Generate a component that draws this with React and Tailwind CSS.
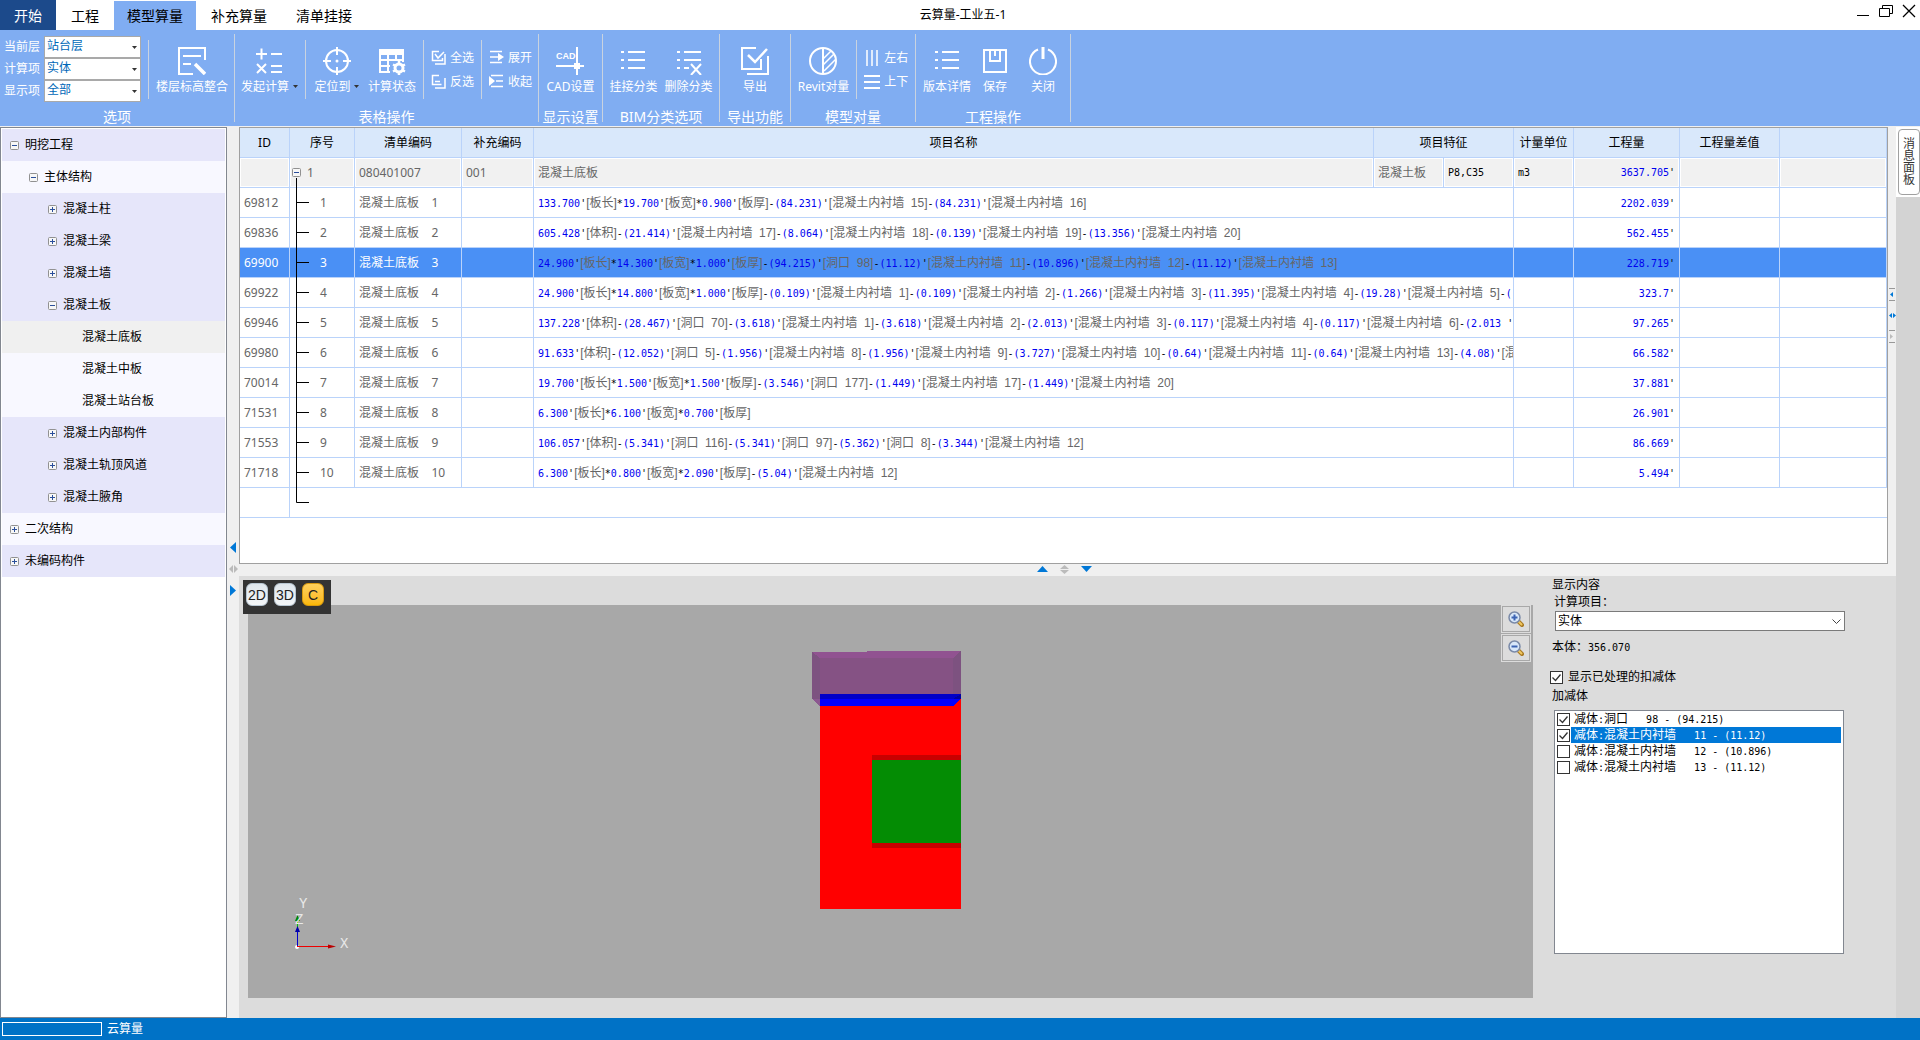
import React, { useState } from "react";
import clsx from "clsx";

const TREE = [
  { level: 0, open: true, label: "明挖工程", tone: "dark" },
  { level: 1, open: true, label: "主体结构", tone: "light" },
  { level: 2, open: false, label: "混凝土柱", tone: "dark" },
  { level: 2, open: false, label: "混凝土梁", tone: "dark" },
  { level: 2, open: false, label: "混凝土墙", tone: "dark" },
  { level: 2, open: true, label: "混凝土板", tone: "dark" },
  { level: 3, label: "混凝土底板", tone: "selected" },
  { level: 3, label: "混凝土中板", tone: "light" },
  { level: 3, label: "混凝土站台板", tone: "light" },
  { level: 2, open: false, label: "混凝土内部构件", tone: "dark" },
  { level: 2, open: false, label: "混凝土轨顶风道", tone: "dark" },
  { level: 2, open: false, label: "混凝土腋角", tone: "dark" },
  { level: 0, open: false, label: "二次结构", tone: "light" },
  { level: 0, open: false, label: "未编码构件", tone: "dark" }
];

const TREE_TONES = {
  dark: "bg-[#e6e6fa]",
  light: "bg-[#f8f8ff]",
  selected: "bg-[#f0f0f0]"
};

const TREE_INDENT = ["pl-2", "pl-[27px]", "pl-[46px]", "pl-20"];

const ROWS = [
  { id: "69812", no: 1, qty: "2202.039'", formula: "133.700'[板长]*19.700'[板宽]*0.900'[板厚]-(84.231)'[混凝土内衬墙  15]-(84.231)'[混凝土内衬墙  16]" },
  { id: "69836", no: 2, qty: "562.455'", formula: "605.428'[体积]-(21.414)'[混凝土内衬墙  17]-(8.064)'[混凝土内衬墙  18]-(0.139)'[混凝土内衬墙  19]-(13.356)'[混凝土内衬墙  20]" },
  { id: "69900", no: 3, qty: "228.719'", formula: "24.900'[板长]*14.300'[板宽]*1.000'[板厚]-(94.215)'[洞口  98]-(11.12)'[混凝土内衬墙  11]-(10.896)'[混凝土内衬墙  12]-(11.12)'[混凝土内衬墙  13]" },
  { id: "69922", no: 4, qty: "323.7'", formula: "24.900'[板长]*14.800'[板宽]*1.000'[板厚]-(0.109)'[混凝土内衬墙  1]-(0.109)'[混凝土内衬墙  2]-(1.266)'[混凝土内衬墙  3]-(11.395)'[混凝土内衬墙  4]-(19.28)'[混凝土内衬墙  5]-(" },
  { id: "69946", no: 5, qty: "97.265'", formula: "137.228'[体积]-(28.467)'[洞口  70]-(3.618)'[混凝土内衬墙  1]-(3.618)'[混凝土内衬墙  2]-(2.013)'[混凝土内衬墙  3]-(0.117)'[混凝土内衬墙  4]-(0.117)'[混凝土内衬墙  6]-(2.013 '" },
  { id: "69980", no: 6, qty: "66.582'", formula: "91.633'[体积]-(12.052)'[洞口  5]-(1.956)'[混凝土内衬墙  8]-(1.956)'[混凝土内衬墙  9]-(3.727)'[混凝土内衬墙  10]-(0.64)'[混凝土内衬墙  11]-(0.64)'[混凝土内衬墙  13]-(4.08)'[混" },
  { id: "70014", no: 7, qty: "37.881'", formula: "19.700'[板长]*1.500'[板宽]*1.500'[板厚]-(3.546)'[洞口  177]-(1.449)'[混凝土内衬墙  17]-(1.449)'[混凝土内衬墙  20]" },
  { id: "71531", no: 8, qty: "26.901'", formula: "6.300'[板长]*6.100'[板宽]*0.700'[板厚]" },
  { id: "71553", no: 9, qty: "86.669'", formula: "106.057'[体积]-(5.341)'[洞口  116]-(5.341)'[洞口  97]-(5.362)'[洞口  8]-(3.344)'[混凝土内衬墙  12]" },
  { id: "71718", no: 10, qty: "5.494'", formula: "6.300'[板长]*0.800'[板宽]*2.090'[板厚]-(5.04)'[混凝土内衬墙  12]" }
];

const DEDUCTIONS = [
  { label: "减体:洞口   98 - (94.215)", checked: true },
  { label: "减体:混凝土内衬墙   11 - (11.12)", checked: true },
  { label: "减体:混凝土内衬墙   12 - (10.896)", checked: false },
  { label: "减体:混凝土内衬墙   13 - (11.12)", checked: false }
];

export default function App() {
  const [row, setRow] = useState("69900");

  return (
    <div className="h-screen flex flex-col overflow-hidden bg-[#f0f0f0] text-xs text-black font-['Noto_Sans','Noto_Sans_CJK_SC',sans-serif]">
      <TitleBar />
      <Ribbon />
      <main className="flex-1 min-h-0 flex pt-px">
        <ComponentTree />
        <SideSplitter />
        <div className="flex-1 min-w-0 flex flex-col">
          <div className="flex-[437_1_0%] min-h-0 flex">
            <QuantityTable selected={row} onSelect={setRow} />
            <DockSplitter />
          </div>
          <MiddleSplitter />
          <div className="flex-[442_1_0%] min-h-0 flex bg-[#dcdcdc]">
            <Viewport />
            <DetailPanel />
          </div>
        </div>
        <aside className="w-6 bg-[#d3d3d3]">
          <div className="bg-white pt-0.5 pl-0.5 pb-0.5">
            <button className="w-[22px] h-[66px] bg-white border border-[#a0a0a0] rounded-sm flex items-center justify-center">
              <span className="w-3 leading-3 text-[#333] break-all">消息面板</span>
            </button>
          </div>
        </aside>
      </main>
      <footer className="h-[22px] bg-[#0072c6] text-white flex items-center gap-[5px] pl-0.5">
        <div className="w-[100px] h-3.5 border border-white" role="progressbar" aria-label="进度" />
        <span className="leading-4">云算量</span>
      </footer>
    </div>
  );
}

/* ---------- title bar ---------- */

function TitleBar() {
  return (
    <header className="h-[30px] bg-white grid grid-cols-[1fr_auto_1fr]">
      <nav className="flex text-sm leading-[30px]">
        <button className="w-14 bg-[#1c4a8b] text-white">开始</button>
        <button className="w-[58px]">工程</button>
        <button className="w-[82px] mt-px bg-[#80adf2]">模型算量</button>
        <button className="w-[86px]">补充算量</button>
        <button className="w-[84px]">清单挂接</button>
      </nav>
      <h1 className="leading-[30px] pl-1.5">云算量-工业五-1</h1>
      <div className="flex justify-end items-start gap-[9px] pt-1 pr-1">
        <button aria-label="最小化">
          <svg width="14" height="14" viewBox="0 0 14 14"><path d="M1 11.5h12" stroke="#000" /></svg>
        </button>
        <button aria-label="还原">
          <svg width="14" height="14" viewBox="0 0 14 14" fill="none" stroke="#000">
            <path d="M.5 4.5h10v8h-10z" />
            <path d="M3.500 4V1.500h10v8h-3" />
          </svg>
        </button>
        <button aria-label="关闭窗口">
          <svg width="14" height="14" viewBox="0 0 14 14"><path d="M1 1l12 12M13 1L1 13" stroke="#000" strokeWidth="1.300" /></svg>
        </button>
      </div>
    </header>
  );
}

/* ---------- ribbon ---------- */

function Ribbon() {
  return (
    <div className="h-24 bg-[#80adf2] text-white flex py-1">
      <RibbonGroup title="选项" width="w-[235px]">
        <div className="flex flex-col -ml-0.5 mt-0.5 self-start">
          <RibbonSelect id="floor" label="当前层" value="站台层" />
          <RibbonSelect id="calc" label="计算项" value="实体" />
          <RibbonSelect id="show" label="显示项" value="全部" />
        </div>
        <Divider />
        <Tool icon={<IconFloor />} label="楼层标高整合" />
      </RibbonGroup>
      <RibbonGroup title="表格操作" width="w-[304px]">
        <Tool icon={<IconCalc />} label="发起计算" caret />
        <Divider />
        <Tool icon={<IconTarget />} label="定位到" caret />
        <Tool icon={<IconStatus />} label="计算状态" />
        <Divider />
        <div className="flex flex-col gap-1">
          <SmallTool icon={<IconSelectAll />} label="全选" />
          <SmallTool icon={<IconInvert />} label="反选" />
        </div>
        <Divider />
        <div className="flex flex-col gap-1">
          <SmallTool icon={<IconExpand />} label="展开" />
          <SmallTool icon={<IconCollapse />} label="收起" />
        </div>
      </RibbonGroup>
      <RibbonGroup title="显示设置" width="w-16">
        <Tool icon={<IconCad />} label="CAD设置" />
      </RibbonGroup>
      <RibbonGroup title="BIM分类选项" width="w-[117px]">
        <Tool icon={<IconList />} label="挂接分类" />
        <Tool icon={<IconListRemove />} label="删除分类" />
      </RibbonGroup>
      <RibbonGroup title="导出功能" width="w-[71px]">
        <Tool icon={<IconExport />} label="导出" />
      </RibbonGroup>
      <RibbonGroup title="模型对量" width="w-[125px]">
        <Tool icon={<IconRevit />} label="Revit对量" />
        <Divider />
        <div className="flex flex-col gap-1">
          <SmallTool icon={<IconColumns />} label="左右" />
          <SmallTool icon={<IconRows />} label="上下" />
        </div>
      </RibbonGroup>
      <RibbonGroup title="工程操作" width="w-[155px]" tight>
        <Tool icon={<IconList />} label="版本详情" />
        <Tool icon={<IconSave />} label="保存" />
        <Tool icon={<IconPower />} label="关闭" />
      </RibbonGroup>
    </div>
  );
}

function RibbonGroup({ title, width, tight, children }) {
  return (
    <section className={clsx("flex flex-col border-r border-[#c9d3e0]", width)}>
      <div className={clsx("h-[71px] shrink-0 flex items-center justify-center", tight ? "pl-1" : "gap-[7px]")}>{children}</div>
      <h2 className="text-sm leading-4 text-center mt-1 whitespace-nowrap">{title}</h2>
    </section>
  );
}

function Divider() {
  return <div className="w-px h-[59px] shrink-0 bg-[#c9d3e0]" />;
}

function RibbonSelect({ id, label, value }) {
  return (
    <div className="flex items-center">
      <label htmlFor={id} className="w-10 leading-[22px] whitespace-nowrap">{label}</label>
      <div className="relative">
        <select id={id} className="block appearance-none w-[97px] h-[22px] pl-0.5 pb-0.5 leading-4 bg-white border border-[#a9a9a9] text-[#0068b8]">
          <option>{value}</option>
        </select>
        <Caret className="absolute right-1 top-2.5 pointer-events-none" />
      </div>
    </div>
  );
}

function Caret({ className }) {
  return (
    <svg className={className} width="5" height="3" viewBox="0 0 5 3"><path d="M0 0h5L2.500 3z" fill="#333" /></svg>
  );
}

function Tool({ icon, label, caret }) {
  return (
    <button className="min-w-12 flex flex-col items-center gap-0.5 pt-1 shrink-0">
      {icon}
      <span className="flex items-center gap-1 leading-5 whitespace-nowrap">
        {label}
        {caret && <Caret />}
      </span>
    </button>
  );
}

function SmallTool({ icon, label }) {
  return (
    <button className="flex items-center gap-1 leading-5 whitespace-nowrap">
      {icon}
      {label}
    </button>
  );
}

function Icon({ size = 28, children }) {
  return (
    <svg width={size} height={size} viewBox={`0 0 ${size} ${size}`} fill="none" stroke="#fff" strokeWidth="2">
      {children}
    </svg>
  );
}

function IconFloor() {
  return (
    <Icon>
      <path d="M27 13V1H1v26h14M5 9h18M5 17h8" />
      <path d="M17 17l10 10" strokeWidth="3.500" />
    </Icon>
  );
}

function IconCalc() {
  return (
    <Icon>
      <path d="M1 7h11M6.500 1.500v11M16 7h11M16 19h11M16 25h11M2 17l9 9M11 17l-9 9" />
    </Icon>
  );
}

function IconTarget() {
  return (
    <Icon>
      <circle cx="14" cy="14" r="11" />
      <path d="M14 0v8M14 20v8M0 14h8M20 14h8" />
      <circle cx="14" cy="14" r="1.500" fill="#fff" stroke="none" />
    </Icon>
  );
}

function IconStatus() {
  return (
    <Icon>
      <path d="M1 2h25v6H1z" fill="#fff" stroke="none" />
      <path d="M2 3v22h10M2 13h23M2 19h10M10 8v17M18 8v6M25 3v12" />
      <circle cx="21" cy="21" r="4" strokeWidth="3" />
      <path d="M21 14v3M21 25v3M15 17.500l3 1.500M24 23l3 1.500M15 24.500l3-1.500M24 19l3-1.500" strokeWidth="2.500" />
    </Icon>
  );
}

function IconSelectAll() {
  return (
    <Icon size={15}>
      <path d="M8 1.500H1.500v9h10V8M14 4v10H4M4 4l3 4 6-6" strokeWidth="1.500" />
    </Icon>
  );
}

function IconInvert() {
  return (
    <Icon size={15}>
      <path d="M8 1.500H1.500v9h9M4 7.500h5M14 4v10H4" strokeWidth="1.500" />
    </Icon>
  );
}

function IconExpand() {
  return (
    <Icon size={15}>
      <path d="M1 1.500h12M1 7h8M1 12.500h12" strokeWidth="1.500" />
      <path d="M9 3l6 4-6 4z" fill="#fff" stroke="none" />
    </Icon>
  );
}

function IconCollapse() {
  return (
    <Icon size={15}>
      <path d="M2 1.500h12M7 7h7M2 12.500h12" strokeWidth="1.500" />
      <path d="M0 2l6 5-6 5z" fill="#fff" stroke="none" />
    </Icon>
  );
}

function IconCad() {
  return (
    <Icon>
      <path d="M21 0v28M0 19h28" />
      <path d="M18 16h6v6h-6z" fill="#fff" stroke="none" />
      <text x="0" y="12" fontSize="9" fontWeight="700" fontFamily="Liberation Sans, sans-serif" fill="#fff" stroke="none">CAD</text>
    </Icon>
  );
}

function IconList() {
  return (
    <Icon>
      <path d="M2 5h3M9 5h17M2 13h3M9 13h17M2 21h3M9 21h17" />
    </Icon>
  );
}

function IconListRemove() {
  return (
    <Icon>
      <path d="M2 5h3M9 5h17M2 13h3M9 13h17M2 21h3M9 21h5M16 17l10 11M26 17L16 28" />
    </Icon>
  );
}

function IconExport() {
  return (
    <Icon>
      <path d="M15 1H1v21h19V12" />
      <path d="M27 9v18H6" />
      <path d="M7 8l7 7L26 2" strokeWidth="2.500" />
    </Icon>
  );
}

function IconRevit() {
  return (
    <Icon>
      <circle cx="14" cy="14" r="13" />
      <path d="M14 1v26" />
      <path d="M14 12l8-8M14 18L25 7M15 24L27 12" strokeWidth="1.500" />
    </Icon>
  );
}

function IconColumns() {
  return (
    <Icon size={16}>
      <path d="M3 0v16M8 0v16M13 0v16" strokeWidth="1.500" />
    </Icon>
  );
}

function IconRows() {
  return (
    <Icon size={16}>
      <path d="M0 2h16M0 8h16M0 14h16" />
    </Icon>
  );
}

function IconSave() {
  return (
    <Icon>
      <path d="M3 3h22v22H3zM9 3v11h10V3M14 4v5" />
    </Icon>
  );
}

function IconPower() {
  return (
    <Icon>
      <path d="M9 2.500a13 13 0 1 0 10 0" />
      <path d="M14 0v12" strokeWidth="3" />
    </Icon>
  );
}

/* ---------- component tree ---------- */

function ComponentTree() {
  return (
    <aside className="w-[227px] shrink-0 bg-white border border-[#828790] p-px">
      <ul>
        {TREE.map(({ level, open, label, tone }) => (
          <li key={label} className={clsx("h-8 flex items-center gap-1.5", TREE_TONES[tone], TREE_INDENT[level])}>
            {open !== undefined && <ToggleBox open={open} />}
            <span>{label}</span>
          </li>
        ))}
      </ul>
    </aside>
  );
}

function ToggleBox({ open }) {
  return (
    <button aria-label={open ? "折叠" : "展开节点"} className="shrink-0">
      <svg className="block" width="9" height="9" viewBox="0 0 9 9">
        <rect x=".5" y=".5" width="8" height="8" rx="1" fill="#f7f7f7" stroke="#919191" />
        <path d={open ? "M2 4.500h5" : "M2 4.500h5M4.500 2v5"} stroke="#2b4f9b" />
      </svg>
    </button>
  );
}

/* ---------- splitters ---------- */

function SideSplitter() {
  return (
    <div className="w-3 shrink-0 flex flex-col items-center justify-center gap-3 pb-2">
      <svg width="6" height="11" viewBox="0 0 6 11"><path d="M6 0v11L0 5.500z" fill="#0078d7" /></svg>
      <svg width="9" height="8" viewBox="0 0 9 8"><path d="M4 0v8L0 4zM5 0v8l4-4z" fill="#bbb" /></svg>
      <svg width="6" height="11" viewBox="0 0 6 11"><path d="M0 0v11l6-5.500z" fill="#0078d7" /></svg>
    </div>
  );
}

function MiddleSplitter() {
  return (
    <div className="h-3 shrink-0 flex items-center justify-center gap-3 pr-1.5 pb-0.5">
      <svg width="11" height="6" viewBox="0 0 11 6"><path d="M0 6h11L5.500 0z" fill="#0078d7" /></svg>
      <svg width="9" height="9" viewBox="0 0 9 9"><path d="M0 4h9L4.500 0zM0 5h9L4.500 9z" fill="#bbb" /></svg>
      <svg width="11" height="6" viewBox="0 0 11 6"><path d="M0 0h11L5.500 6z" fill="#0078d7" /></svg>
    </div>
  );
}

function DockSplitter() {
  return (
    <div className="w-2 shrink-0 flex flex-col items-center justify-center gap-3 pb-[61px]">
      <svg width="6" height="13" viewBox="0 0 6 13">
        <path d="M0 .5h6M0 12.500h6" stroke="#999" />
        <path d="M4 4v5L1 6.500z" fill="#0078d7" />
      </svg>
      <svg width="7" height="5" viewBox="0 0 7 5"><path d="M3 0v5L0 2.500zM4 0v5l3-2.500z" fill="#0078d7" /></svg>
      <svg width="6" height="13" viewBox="0 0 6 13">
        <path d="M0 .5h6M0 12.500h6" stroke="#999" />
        <path d="M1 4v5l3-2.500z" fill="#bbb" />
      </svg>
    </div>
  );
}

/* ---------- quantity table ---------- */

function QuantityTable({ selected, onSelect }) {
  return (
    <div className="flex-1 min-w-0 bg-white border border-[#a0a0a0] overflow-hidden">
      <table className="w-full table-fixed border-separate border-spacing-0 whitespace-nowrap">
        <colgroup>
          <col className="w-[50px]" />
          <col className="w-[65px]" />
          <col className="w-[107px]" />
          <col className="w-[72px]" />
          <col />
          <col className="w-[70px]" />
          <col className="w-[70px]" />
          <col className="w-[60px]" />
          <col className="w-[106px]" />
          <col className="w-[100px]" />
          <col className="w-[107px]" />
        </colgroup>
        <thead>
          <tr className="bg-[#d9e8fb]">
            <HeadCell>ID</HeadCell>
            <HeadCell>序号</HeadCell>
            <HeadCell>清单编码</HeadCell>
            <HeadCell>补充编码</HeadCell>
            <HeadCell>项目名称</HeadCell>
            <HeadCell colSpan={2}>项目特征</HeadCell>
            <HeadCell>计量单位</HeadCell>
            <HeadCell>工程量</HeadCell>
            <HeadCell>工程量差值</HeadCell>
            <HeadCell />
          </tr>
        </thead>
        <tbody className="text-[#666]">
          <tr>
            <GroupCell />
            <GroupCell>
              <span className="flex items-center gap-1.5 -ml-0.5 relative">
                <ToggleBox open />
                <svg className="absolute left-1 top-[13px]" width="1" height="12"><path d="M.5 0v12" stroke="#000" /></svg>
                1
              </span>
            </GroupCell>
            <GroupCell>080401007</GroupCell>
            <GroupCell>001</GroupCell>
            <GroupCell>混凝土底板</GroupCell>
            <GroupCell>混凝土板</GroupCell>
            <GroupCell><Mono className="text-black">P8,C35</Mono></GroupCell>
            <GroupCell><Mono className="text-black">m3</Mono></GroupCell>
            <GroupCell right><Formula text="3637.705'" /></GroupCell>
            <GroupCell />
            <GroupCell />
          </tr>
          {ROWS.map(({ id, no, qty, formula }) => (
            <tr
              key={id}
              onClick={() => onSelect(id)}
              className={id === selected ? "bg-[#4a90f5] text-white" : undefined}
            >
              <Cell>{id}</Cell>
              <td className="h-[30px] p-0 border-r border-b border-[#bad3fa]">
                <div className="h-[29px] flex items-center pl-1.5">
                  <svg className="overflow-visible shrink-0" width="13" height="29">
                    <path d="M.5 0v30M1 14.500h12" stroke="#000" fill="none" />
                  </svg>
                  <span className="ml-[11px]">{no}</span>
                </div>
              </td>
              <Cell>{`混凝土底板    ${no}`}</Cell>
              <Cell />
              <Cell colSpan={3}><Formula text={formula} /></Cell>
              <Cell />
              <Cell right><Formula text={qty} /></Cell>
              <Cell />
              <Cell />
            </tr>
          ))}
          <tr>
            <Cell />
            <td className="h-[30px] p-0 border-b border-[#bad3fa]" colSpan={10}>
              <div className="h-[29px] pl-1.5">
                <svg className="block" width="13" height="29"><path d="M.5 0v14.500h13" stroke="#000" fill="none" /></svg>
              </div>
            </td>
          </tr>
        </tbody>
      </table>
    </div>
  );
}

function HeadCell({ children, colSpan }) {
  return (
    <th colSpan={colSpan} className="h-[30px] p-0 font-normal border-r border-b border-[#bad3fa]">
      {children}
    </th>
  );
}

function GroupCell({ children, right }) {
  return (
    <td className="h-[30px] p-px border-r border-b border-[#bad3fa] bg-white">
      <div className={clsx("h-[27px] flex items-center bg-[#f1f1f1] px-[3px]", right && "justify-end")}>{children}</div>
    </td>
  );
}

function Cell({ children, right, colSpan }) {
  return (
    <td colSpan={colSpan} className="h-[30px] p-0 border-r border-b border-[#bad3fa]">
      <div className={clsx("h-[29px] px-1 leading-[29px] overflow-hidden whitespace-pre", right && "text-right")}>
        {children}
      </div>
    </td>
  );
}

function Mono({ className, children }) {
  return <span className={clsx("font-['DejaVu_Sans_Mono',monospace] text-[10px]", className)}>{children}</span>;
}

// Bracketed remarks are grey, operators and tick marks black, values blue.
function Formula({ text }) {
  return text.split(/(\[[^\]]*\]?|[-*'])/).filter(Boolean).map((part, i) => {
    if (part[0] === "[") {
      return <span key={i} className="text-[#666] font-['Liberation_Sans','Noto_Sans_CJK_SC',sans-serif]">{part}</span>;
    }
    return <Mono key={i} className={/[-*']/.test(part) ? "text-black" : "text-[#0000f0]"}>{part}</Mono>;
  });
}

/* ---------- model view ---------- */

function Viewport() {
  return (
    <div className="flex-1 min-w-0 relative pl-[9px] pt-[29px] pb-5">
      <div className="h-full bg-[#a8a8a8] relative flex items-center justify-center pb-[43px]">
        <svg width="157" height="258" viewBox="0 0 157 258" shapeRendering="crispEdges">
          <path d="M0 1h55V0h94v48l-8 7H8l-8-7z" fill="#855284" />
          <path d="M0 1h55V0h94l-8 7H8z" fill="#915291" />
          <path d="M0 1l8 6v48l-8-7z" fill="#7d5280" />
          <path d="M149 0v48h-8V7z" fill="#7d5280" />
          <path d="M0 48h8v7z" fill="#8c5790" />
          <path d="M8 48h141v210H8z" fill="#f00" />
          <path d="M8 43h141v5H8z" fill="#0000c8" />
          <path d="M8 48h141l-8 7H8z" fill="#00f" />
          <path d="M149 43v5h-8z" fill="#0000a0" />
          <path d="M60 104h89v93H60z" fill="#c80000" />
          <path d="M60 109h89v83H60z" fill="#048c04" />
        </svg>
        <svg className="absolute left-10 bottom-10" width="64" height="70" viewBox="0 0 64 70">
          <circle cx="9" cy="59" r="2" fill="#fff" />
          <path d="M9.500 59V30" stroke="#0c0" />
          <path d="M9.500 27l2.500 6H7z" fill="#080" />
          <path d="M9.500 59V42" stroke="#00c" />
          <path d="M9.500 38l2.500 6H7z" fill="#00a" />
          <path d="M9 58.500h34" stroke="#e00" />
          <path d="M48 58.500l-8-2v4z" fill="#b00" />
          <g fill="#e8e8e8" fontFamily="Liberation Mono, monospace" fontSize="14">
            <text x="11" y="20">Y</text>
            <text x="7" y="36">Z</text>
            <text x="52" y="60">X</text>
          </g>
        </svg>
        <div className="absolute right-0.5 top-0 flex flex-col gap-px">
          <ZoomButton label="放大" plus />
          <ZoomButton label="缩小" />
        </div>
      </div>
      <div className="absolute left-1 top-1 w-[88px] h-[34px] bg-[#333] flex gap-1.5 pl-[3px] pt-[3px]">
        <ViewButton>2D</ViewButton>
        <ViewButton>3D</ViewButton>
        <ViewButton active>C</ViewButton>
      </div>
    </div>
  );
}

function ViewButton({ active, children }) {
  return (
    <button
      className={clsx(
        "w-[22px] h-[23px] rounded-md border text-sm leading-5 text-[#222] flex items-center justify-center font-['Liberation_Sans',sans-serif]",
        active ? "border-[#d99a10] bg-gradient-to-b from-[#ffd05a] to-[#fbb800]" : "border-[#b8c6d2] bg-gradient-to-b from-[#dfe6ec] to-[#f4f6f8]"
      )}
    >
      {children}
    </button>
  );
}

function ZoomButton({ label, plus }) {
  return (
    <button aria-label={label} className="w-[30px] h-7 bg-[#dcdcdc] border border-[#dcdcdc] outline-1 -outline-offset-2 outline-[#a8a8a8] flex items-center justify-center">
      <svg width="16" height="16" viewBox="0 0 16 16" fill="none">
        <path d="M10 10l4 4" stroke="#a87820" strokeWidth="4" strokeLinecap="round" />
        <path d="M11 11l2.500 2.500" stroke="#f0c860" strokeWidth="2" strokeLinecap="round" />
        <circle cx="6.500" cy="6.500" r="5.500" fill="#d8e8fa" stroke="#7a8aa8" strokeWidth="1.500" />
        <path d={plus ? "M3.500 6.500h6M6.500 3.500v6" : "M3.500 6.500h6"} stroke="#3c64b4" strokeWidth="2" />
      </svg>
    </button>
  );
}

/* ---------- detail panel ---------- */

function DetailPanel() {
  return (
    <section className="w-[363px] shrink-0 flex flex-col pl-[17px] pr-[52px] pb-16 leading-4">
      <h2 className="pl-0.5 pt-px">显示内容</h2>
      <label htmlFor="calc-item" className="pl-1 mt-px">计算项目：</label>
      <div className="relative ml-[5px] mt-px -mr-px">
        <select id="calc-item" className="block appearance-none w-full h-5 pl-0.5 leading-4 bg-white border border-[#7a7a7a]">
          <option>实体</option>
        </select>
        <svg className="absolute right-1 top-2 pointer-events-none" width="9" height="6" viewBox="0 0 9 6">
          <path d="M.5 .5l4 4 4-4" fill="none" stroke="#444" />
        </svg>
      </div>
      <p className="pl-0.5 mt-2 h-4">
        本体：<Mono>356.070</Mono>
      </p>
      <label className="flex items-center gap-[5px] mt-3.5">
        <CheckBox checked />
        显示已处理的扣减体
      </label>
      <h3 className="pl-0.5 mt-[3px]">加减体</h3>
      <ul className="flex-1 ml-1 mt-1.5 bg-white border border-[#828790] px-0.5">
        {DEDUCTIONS.map(({ label, checked }, i) => (
          <li key={label}>
            <label className="h-4 flex items-center gap-px">
              <CheckBox checked={checked} />
              <span className={clsx("flex-1 h-4 pl-[3px] whitespace-pre", i === 1 && "bg-[#0078d7] text-white")}>
                <Mixed text={label} />
              </span>
            </label>
          </li>
        ))}
      </ul>
    </section>
  );
}

function Mixed({ text }) {
  return text.split(/([\u4e00-\u9fff]+)/).filter(Boolean).map((part, i) =>
    /[\u4e00-\u9fff]/.test(part) ? <span key={i}>{part}</span> : <Mono key={i}>{part}</Mono>
  );
}

function CheckBox({ checked }) {
  return (
    <span className="relative w-[13px] h-[13px] shrink-0">
      <input type="checkbox" defaultChecked={checked} className="peer block appearance-none w-[13px] h-[13px] bg-white border border-[#333]" />
      <svg className="absolute inset-0 hidden peer-checked:block pointer-events-none" width="13" height="13" viewBox="0 0 13 13">
        <path d="M2.500 6.500l3 3 5-6" fill="none" stroke="#333" strokeWidth="1.300" />
      </svg>
    </span>
  );
}
